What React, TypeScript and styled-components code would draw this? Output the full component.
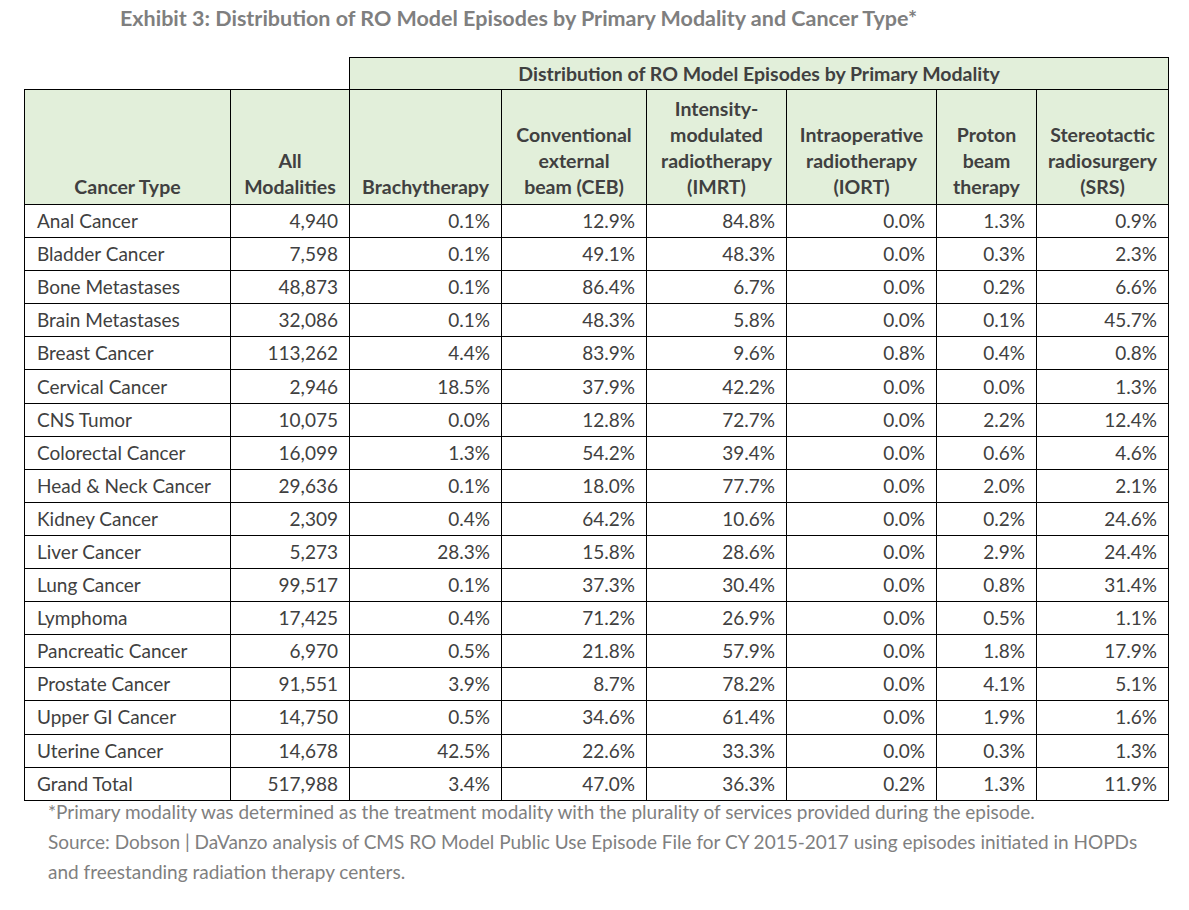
import React from "react";
import styled, { createGlobalStyle } from "styled-components";

const GlobalStyle = createGlobalStyle`
  body {
    margin: 0;
    background: #fff;
    font-family: Lato, "Liberation Sans", sans-serif;
  }
`;

interface Row {
  type: string;
  all: string;
  values: string[];
}

const rows: Row[] = [
  { type: "Anal Cancer", all: "4,940", values: ["0.1%", "12.9%", "84.8%", "0.0%", "1.3%", "0.9%"] },
  { type: "Bladder Cancer", all: "7,598", values: ["0.1%", "49.1%", "48.3%", "0.0%", "0.3%", "2.3%"] },
  { type: "Bone Metastases", all: "48,873", values: ["0.1%", "86.4%", "6.7%", "0.0%", "0.2%", "6.6%"] },
  { type: "Brain Metastases", all: "32,086", values: ["0.1%", "48.3%", "5.8%", "0.0%", "0.1%", "45.7%"] },
  { type: "Breast Cancer", all: "113,262", values: ["4.4%", "83.9%", "9.6%", "0.8%", "0.4%", "0.8%"] },
  { type: "Cervical Cancer", all: "2,946", values: ["18.5%", "37.9%", "42.2%", "0.0%", "0.0%", "1.3%"] },
  { type: "CNS Tumor", all: "10,075", values: ["0.0%", "12.8%", "72.7%", "0.0%", "2.2%", "12.4%"] },
  { type: "Colorectal Cancer", all: "16,099", values: ["1.3%", "54.2%", "39.4%", "0.0%", "0.6%", "4.6%"] },
  { type: "Head & Neck Cancer", all: "29,636", values: ["0.1%", "18.0%", "77.7%", "0.0%", "2.0%", "2.1%"] },
  { type: "Kidney Cancer", all: "2,309", values: ["0.4%", "64.2%", "10.6%", "0.0%", "0.2%", "24.6%"] },
  { type: "Liver Cancer", all: "5,273", values: ["28.3%", "15.8%", "28.6%", "0.0%", "2.9%", "24.4%"] },
  { type: "Lung Cancer", all: "99,517", values: ["0.1%", "37.3%", "30.4%", "0.0%", "0.8%", "31.4%"] },
  { type: "Lymphoma", all: "17,425", values: ["0.4%", "71.2%", "26.9%", "0.0%", "0.5%", "1.1%"] },
  { type: "Pancreatic Cancer", all: "6,970", values: ["0.5%", "21.8%", "57.9%", "0.0%", "1.8%", "17.9%"] },
  { type: "Prostate Cancer", all: "91,551", values: ["3.9%", "8.7%", "78.2%", "0.0%", "4.1%", "5.1%"] },
  { type: "Upper GI Cancer", all: "14,750", values: ["0.5%", "34.6%", "61.4%", "0.0%", "1.9%", "1.6%"] },
  { type: "Uterine Cancer", all: "14,678", values: ["42.5%", "22.6%", "33.3%", "0.0%", "0.3%", "1.3%"] },
  { type: "Grand Total", all: "517,988", values: ["3.4%", "47.0%", "36.3%", "0.2%", "1.3%", "11.9%"] },
];

const modalities: string[][] = [
  ["Brachytherapy"],
  ["Conventional", "external", "beam (CEB)"],
  ["Intensity-", "modulated", "radiotherapy", "(IMRT)"],
  ["Intraoperative", "radiotherapy", "(IORT)"],
  ["Proton", "beam", "therapy"],
  ["Stereotactic", "radiosurgery", "(SRS)"],
];

const colWidths = [206, 119, 152, 145, 140, 150, 100, 132];

const Page = styled.div`
  width: 1189px;
  padding: 0 0 0 24px;
  box-sizing: border-box;
`;

const Title = styled.h1`
  margin: 0;
  padding: 5px 0 0 96px;
  height: 57px;
  box-sizing: border-box;
  font-size: 21.5px;
  line-height: 26px;
  font-weight: 700;
  color: #7f7f7f;
  white-space: nowrap;
`;

const Table = styled.table`
  border-collapse: collapse;
  table-layout: fixed;
  width: 1145px;
  color: #404040;
  font-size: 19px;
`;

const BlankHead = styled.th`
  border: none;
  background: transparent;
`;

const GroupHead = styled.th`
  height: 31px;
  padding: 0;
  background: #e2efda;
  border: 1px solid #000;
  font-weight: 700;
  font-size: 19.5px;
  line-height: 24px;
  text-align: center;
  vertical-align: middle;
`;

const ColHead = styled.th`
  height: 110px;
  padding: 0 2px 4px;
  background: #e2efda;
  border: 1px solid #000;
  font-weight: 700;
  font-size: 19.5px;
  text-align: center;
  vertical-align: bottom;
  line-height: 26px;
  white-space: nowrap;
`;

const Cell = styled.td<{ $left?: boolean }>`
  height: 32.1px;
  padding: ${(p) => (p.$left ? "0 6px 0 12px" : "0 11px 0 6px")};
  border: 1px solid #000;
  text-align: ${(p) => (p.$left ? "left" : "right")};
  vertical-align: middle;
  white-space: nowrap;
  line-height: 22px;
`;

const Notes = styled.div`
  margin-top: -4px;
  padding: 0 0 0 24px;
  color: #7f7f7f;
  font-size: 19px;
  line-height: 30px;
  white-space: nowrap;
`;

const HeadLines: React.FC<{ lines: string[] }> = ({ lines }) => (
  <>
    {lines.map((l, i) => (
      <div key={i}>{l}</div>
    ))}
  </>
);

export default function App() {
  return (
    <Page>
      <GlobalStyle />
      <Title>Exhibit 3: Distribution of RO Model Episodes by Primary Modality and Cancer Type*</Title>
      <Table>
        <colgroup>
          {colWidths.map((w, i) => (
            <col key={i} style={{ width: w }} />
          ))}
        </colgroup>
        <thead>
          <tr>
            <BlankHead colSpan={2} />
            <GroupHead colSpan={6}>Distribution of RO Model Episodes by Primary Modality</GroupHead>
          </tr>
          <tr>
            <ColHead>Cancer Type</ColHead>
            <ColHead>
              <HeadLines lines={["All", "Modalities"]} />
            </ColHead>
            {modalities.map((m, i) => (
              <ColHead key={i}>
                <HeadLines lines={m} />
              </ColHead>
            ))}
          </tr>
        </thead>
        <tbody>
          {rows.map((r) => (
            <tr key={r.type}>
              <Cell $left>{r.type}</Cell>
              <Cell>{r.all}</Cell>
              {r.values.map((v, i) => (
                <Cell key={i}>{v}</Cell>
              ))}
            </tr>
          ))}
        </tbody>
      </Table>
      <Notes>
        <div>*Primary modality was determined as the treatment modality with the plurality of services provided during the episode.</div>
        <div>Source: Dobson | DaVanzo analysis of CMS RO Model Public Use Episode File for CY 2015-2017 using episodes initiated in HOPDs</div>
        <div>and freestanding radiation therapy centers.</div>
      </Notes>
    </Page>
  );
}
